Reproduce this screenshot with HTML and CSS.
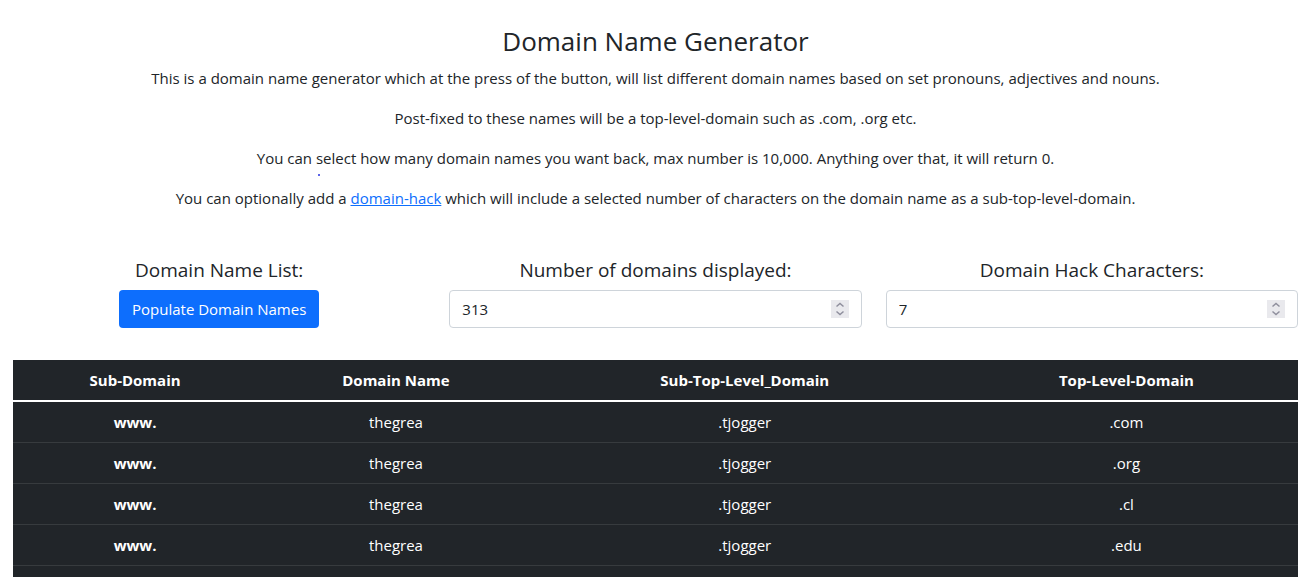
FILE: index.html
```html
<!DOCTYPE html>
<html lang="en">
<head>
<meta charset="utf-8">
<title>Domain Name Generator</title>
<link rel="stylesheet" href="styles.css">
</head>
<body>
<main class="page">
  <header class="intro">
    <h1 class="title">Domain Name Generator</h1>
    <p>This is a domain name generator which at the press of the button, will list different domain names based on set pronouns, adjectives and nouns.</p>
    <p>Post-fixed to these names will be a top-level-domain such as .com, .org etc.</p>
    <p>You can select how many domain names you want back, max number is 10,000. Anything over that, it will return 0.</p>
    <p>You can optionally add a <a href="#hack">domain-hack</a> which will include a selected number of characters on the domain name as a sub-top-level-domain.</p>
    <span class="dot" aria-hidden="true"></span>
  </header>
  <form class="controls">
    <div class="field">
      <h2 class="label">Domain Name List:</h2>
      <button class="button" type="button">Populate Domain Names</button>
    </div>
    <div class="field">
      <label class="label" for="count">Number of domains displayed:</label>
      <div class="number">
        <input id="count" type="text" inputmode="numeric" value="313">
        <span class="spinner" aria-hidden="true"><svg viewBox="0 0 18 18"><path d="M5.5 6.5L9 3.5l3.5 3M5.5 11.5l3.5 3 3.5-3"/></svg></span>
      </div>
    </div>
    <div class="field">
      <label class="label" for="hack">Domain Hack Characters:</label>
      <div class="number">
        <input id="hack" type="text" inputmode="numeric" value="7">
        <span class="spinner" aria-hidden="true"><svg viewBox="0 0 18 18"><path d="M5.5 6.5L9 3.5l3.5 3M5.5 11.5l3.5 3 3.5-3"/></svg></span>
      </div>
    </div>
  </form>
  <div class="results">
    <table class="domains">
      <colgroup><col class="c-sub"><col class="c-name"><col class="c-hack"><col class="c-top"></colgroup>
      <thead>
        <tr><th scope="col">Sub-Domain</th><th scope="col">Domain Name</th><th scope="col">Sub-Top-Level_Domain</th><th scope="col">Top-Level-Domain</th></tr>
      </thead>
      <tbody>
        <tr><th scope="row">www.</th><td>thegrea</td><td>.tjogger</td><td>.com</td></tr>
        <tr><th scope="row">www.</th><td>thegrea</td><td>.tjogger</td><td>.org</td></tr>
        <tr><th scope="row">www.</th><td>thegrea</td><td>.tjogger</td><td>.cl</td></tr>
        <tr><th scope="row">www.</th><td>thegrea</td><td>.tjogger</td><td>.edu</td></tr>
      </tbody>
    </table>
  </div>
</main>
</body>
</html>
```
FILE: styles.css
```css
* { box-sizing: border-box; }
body {
  margin: 0;
  background: #fff;
  color: #212529;
  font: 15px/24px "Open Sans", "Noto Sans", sans-serif;
  text-align: center;
}
.page {
  display: flex;
  flex-direction: column;
  min-height: 100vh;
  padding: 24px 18px 0 13px;
}
.intro { position: relative; }
.title { margin: 0 0 8px; font-size: 26px; line-height: 34px; font-weight: 400; }
.intro p { margin: 0 0 16px; }
.intro a { color: #0d6efd; }
.dot {
  position: absolute;
  top: 150px;
  left: 23.7%;
  width: 2px;
  height: 2px;
  border-radius: 1px;
  background: #2430e0;
}
.controls {
  display: grid;
  grid-template-columns: repeat(3, 1fr);
  gap: 24px;
  margin: 32px 0;
}
.label {
  display: block;
  margin: 0 0 8px;
  font-size: 19px;
  line-height: 24px;
  font-weight: 400;
}
.button {
  display: block;
  height: 38px;
  margin: 0 auto;
  padding: 0 13px;
  border: 0;
  border-radius: 4px;
  background: #0d6efd;
  color: #fff;
  font: inherit;
}
.number { position: relative; }
.number input {
  display: block;
  width: 100%;
  height: 38px;
  padding: 0 12px;
  border: 1px solid #ced4da;
  border-radius: 4px;
  background: #fff;
  color: inherit;
  font: inherit;
}
.spinner {
  position: absolute;
  top: 10px;
  right: 13px;
  width: 18px;
  height: 18px;
  background: #e9e9ed;
}
.spinner svg { display: block; fill: none; stroke: #8f8f9d; stroke-width: 1.5; }
.results { flex: 1; background: #212529; color: #fff; }
.domains {
  width: 100%;
  table-layout: fixed;
  border-collapse: collapse;
}
.domains th, .domains td { padding: 8px; border-bottom: 1px solid #373b3e; }
.domains thead th { border-bottom: 2px solid #fff; }
.c-sub { width: 19%; }
.c-name { width: 21.6%; }
.c-hack { width: 32.7%; }
```
